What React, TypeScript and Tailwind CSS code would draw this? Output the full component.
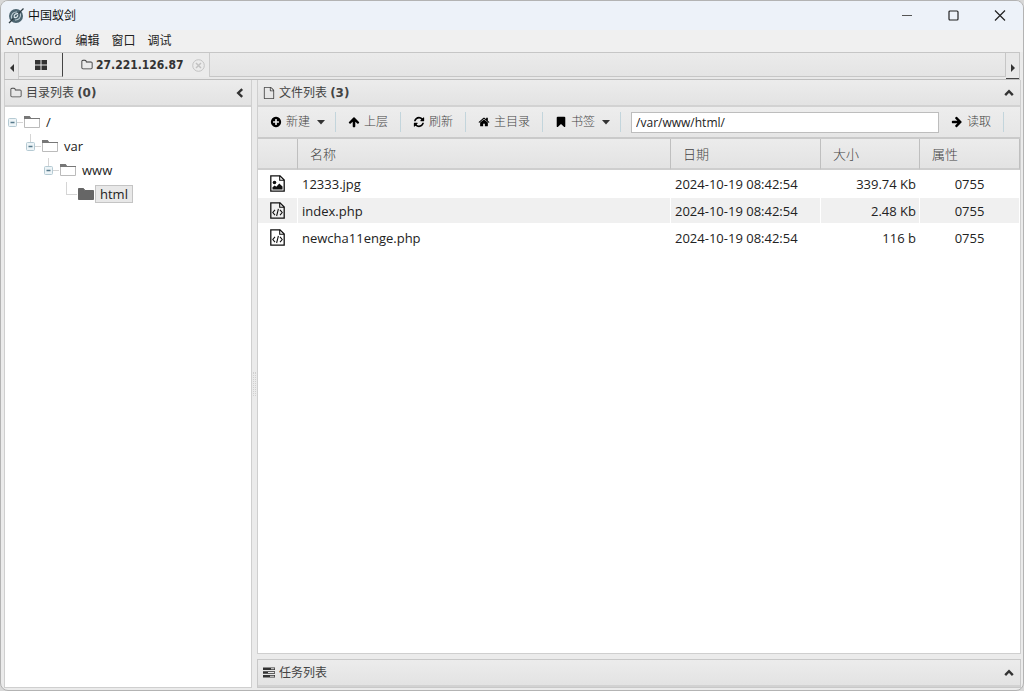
import React, { useState } from "react";
import clsx from "clsx";

interface FileRow {
  name: string;
  date: string;
  size: string;
  mode: string;
  kind: "image" | "code";
}

const files: FileRow[] = [
  { name: "12333.jpg", date: "2024-10-19 08:42:54", size: "339.74 Kb", mode: "0755", kind: "image" },
  { name: "index.php", date: "2024-10-19 08:42:54", size: "2.48 Kb", mode: "0755", kind: "code" },
  { name: "newcha11enge.php", date: "2024-10-19 08:42:54", size: "116 b", mode: "0755", kind: "code" },
];

const icons = {
  plus: "M1344 960v-128q0-26-19-45t-45-19h-256v-256q0-26-19-45t-45-19h-128q-26 0-45 19t-19 45v256h-256q-26 0-45 19t-19 45v128q0 26 19 45t45 19h256v256q0 26 19 45t45 19h128q26 0 45-19t19-45v-256h256q26 0 45-19t19-45zm320-64q0 209-103 385.5t-279.5 279.5-385.5 103-385.5-103-279.5-279.5-103-385.5 103-385.5 279.5-279.5 385.5-103 385.5 103 279.5 279.5 103 385.5z",
  up: "M1675 971q0 51-37 90l-75 75q-38 38-91 38-54 0-90-38l-294-293v704q0 52-37.5 84.5t-90.5 32.5h-128q-53 0-90.5-32.5t-37.5-84.5v-704l-294 293q-36 38-90 38t-90-38l-75-75q-38-38-38-90 0-53 38-91l651-651q35-37 90-37 54 0 91 37l651 651q37 39 37 91z",
  refresh:
    "M1639 1056q0 5-1 7-64 268-268 434.5t-478 166.5q-146 0-282.5-55t-243.5-157l-129 129q-19 19-45 19t-45-19-19-45v-448q0-26 19-45t45-19h448q26 0 45 19t19 45-19 45l-137 137q71 66 161 102t187 36q134 0 250-65t186-179q11-17 53-117 8-23 30-23h192q13 0 22.5 9.5t9.5 22.5zm25-800v448q0 26-19 45t-45 19h-448q-26 0-45-19t-19-45 19-45l138-138q-148-137-349-137-134 0-250 65t-186 179q-11 17-53 117-8 23-30 23h-199q-13 0-22.5-9.5t-9.5-22.5v-7q65-268 270-434.5t480-166.5q146 0 284 55.5t245 156.5l130-129q19-19 45-19t45 19 19 45z",
  home: "M1472 992v480q0 26-19 45t-45 19h-384v-384h-256v384h-384q-26 0-45-19t-19-45v-480q0-1 .5-3t.5-3l575-474 575 474q1 2 1 6zm223-69l-62 74q-8 9-21 11h-3q-13 0-21-7l-692-577-692 577q-12 8-24 7-13-2-21-11l-62-74q-8-10-7-23.5t11-21.5l719-599q32-26 76-26t76 26l244 204v-195q0-14 9-23t23-9h192q14 0 23 9t9 23v408l219 182q10 8 11 21.5t-7 23.5z",
  bookmark:
    "M1420 128q23 0 44 9 33 13 52.5 41t19.5 62v1289q0 34-19.5 62t-52.5 41q-19 8-44 8-48 0-83-32l-441-424-441 424q-36 33-83 33-23 0-44-9-33-13-52.5-41t-19.5-62v-1289q0-34 19.5-62t52.5-41q21-9 44-9h1048z",
  folder:
    "M1600 1312v-704q0-40-28-68t-68-28h-704q-40 0-68-28t-28-68v-64q0-40-28-68t-68-28h-320q-40 0-68 28t-28 68v960q0 40 28 68t68 28h1216q40 0 68-28t28-68zm128-704v704q0 92-66 158t-158 66h-1216q-92 0-158-66t-66-158v-960q0-92 66-158t158-66h320q92 0 158 66t66 158v32h672q92 0 158 66t66 158z",
  file: "M1596 380q28 28 48 76t20 88v1152q0 40-28 68t-68 28h-1344q-40 0-68-28t-28-68v-1600q0-40 28-68t68-28h896q40 0 88 20t76 48zm-444-244v376h376q-10-29-22-41l-313-313q-12-12-41-22zm384 1528v-1024h-416q-40 0-68-28t-28-68v-416h-768v1536h1280z",
};

const Icon: React.FC<{ d: string; className?: string }> = ({ d, className }) => (
  <svg viewBox="0 0 1792 1792" fill="currentColor" className={clsx("shrink-0", className || "w-3 h-3")}>
    <path d={d} />
  </svg>
);

const Chevron: React.FC<{ left?: boolean }> = ({ left }) => (
  <svg viewBox="0 0 10 10" className="w-[10px] h-[10px] shrink-0" fill="none" stroke="#333" strokeWidth="2.4">
    <path d={left ? "M7.2 1.2L3.2 5L7.2 8.8" : "M1.2 7.2L5 3.2L8.8 7.2"} />
  </svg>
);

const Logo = () => (
  <svg viewBox="0 0 16 16" className="w-4 h-4">
    <circle cx="8" cy="8" r="7" fill="#4c6470" />
    <path d="M3.6 10.5C2.6 6.5 5.5 3.6 9 4M12.4 5.5c1 4-1.9 6.9-5.4 6.5" fill="none" stroke="#b9c8cf" strokeWidth="1.1" />
    <path d="M10.2 5.6C7 5.4 5.6 7.5 6.4 9.5c1.9.5 3.7-.8 3.3-2.7" fill="none" stroke="#dde6ea" strokeWidth="1.1" />
    <path d="M1 15L5.5 10.5M10.5 5.5L15.5.5" stroke="#2d3b42" strokeWidth="1.3" />
  </svg>
);

const FileIcon: React.FC<{ kind: FileRow["kind"] }> = ({ kind }) => (
  <svg viewBox="0 0 15 17" className="w-[15px] h-[17px] mx-auto" fill="none" stroke="#111" strokeWidth="1.3">
    <path d="M.8.8H10L14.2 5V16.2H.8z" />
    <path d="M9.7.8V5.3H14.2" strokeWidth="1.1" />
    {kind === "image" ? (
      <g fill="#111" stroke="none">
        <circle cx="4.5" cy="7.5" r="1.8" />
        <path d="M2.5 14.5V12.3L4.7 10.6L6.3 11.8L9.3 8.5L12.5 11.5V14.5z" />
      </g>
    ) : (
      <path d="M5 7.8L2.8 10.5L5 13.2M10 7.8L12.2 10.5L10 13.2M8.4 6.8L6.6 14" strokeWidth="1.1" />
    )}
  </svg>
);

const Caret = () => (
  <svg viewBox="0 0 8 5" className="w-2 h-[5px] ml-[3px]" fill="#333">
    <path d="M0 0H8L4 4.5z" />
  </svg>
);

const ToolButton: React.FC<{ icon: string; label: string; menu?: boolean; iconClass?: string }> = ({
  icon,
  label,
  menu,
  iconClass,
}) => (
  <button
    className={clsx(
      "flex items-center gap-1 h-5 pl-3 border-r border-[#c3d5dc] text-xs shrink-0 whitespace-nowrap",
      menu ? "pr-[10px]" : "pr-3"
    )}
  >
    <Icon d={icon} className={clsx("w-3 h-3 text-black", iconClass)} />
    <span className="font-light text-[#444]">{label}</span>
    {menu && <Caret />}
  </button>
);

const TreeNode: React.FC<{
  label: string;
  root?: boolean;
  open?: boolean;
  selected?: boolean;
  children?: React.ReactNode;
}> = ({ label, root, open, selected, children }) => (
  <li>
    <div className="flex items-center h-6">
      <svg viewBox="0 0 18 24" className="w-[18px] h-6 shrink-0" fill="none">
        {!root && <path d={open ? "M4.5 0V8" : "M4.5 0V12"} stroke="#d5d5d5" />}
        <path d="M4 12.5H15" stroke="#d5d5d5" />
        {open && (
          <>
            <rect x=".5" y="8.5" width="8" height="8" rx="1" fill="#edf4f7" stroke="#b5cad3" />
            <path d="M2.5 12.5H6.5" stroke="#55788a" strokeWidth="1.5" />
          </>
        )}
      </svg>
      <svg viewBox="0 0 16 12" className="w-4 h-3 shrink-0 -ml-[2px]" fill={open ? "#fff" : "#666"}>
        <path d="M.5 11.5V.5H5.5L7 2.5H15.5V11.5z" stroke={open ? "#bbb" : "#666"} />
        {open && <path d="M0 3V0H5.7L7 2H16V3z" fill="#777" />}
      </svg>
      <span
        className={clsx(
          "ml-px px-1 h-[18px] leading-4 border text-[13px]",
          selected ? "bg-[#e8e8e8] border-[#c4c4c4]" : "border-transparent"
        )}
      >
        {label}
      </span>
    </div>
    {children && <ul className="pl-[18px]">{children}</ul>}
  </li>
);

const panelHead =
  "flex items-center justify-between h-[27px] px-[5px] border-b-2 border-[#d2d2d2] bg-linear-to-b from-[#ececec] to-[#e3e3e3] text-xs text-[#444] shrink-0";
const countText = "font-['DejaVu_Sans',sans-serif] font-bold";

const App: React.FC = () => {
  const [path, setPath] = useState("/var/www/html/");

  return (
    <div className="h-screen bg-[#d8d8d8]">
      <div className="flex flex-col h-full overflow-hidden border border-[#b3b3b3] rounded-lg bg-[#ebebeb] font-['Open_Sans','Noto_Sans_CJK_SC',sans-serif] text-[#222]">
        {/* Title bar */}
        <header className="flex items-center justify-between h-[29px] pl-[7px] bg-[#edf2f9] shrink-0">
          <div className="flex items-center gap-1">
            <Logo />
            <h1 className="text-xs text-[#111]">中国蚁剑</h1>
          </div>
          <div className="flex h-full">
            <button aria-label="最小化" className="w-[46px] flex items-center justify-center">
              <svg viewBox="0 0 12 12" className="w-3 h-3">
                <path d="M0 5.5H10" stroke="#555" />
              </svg>
            </button>
            <button aria-label="最大化" className="w-[46px] flex items-center justify-center">
              <svg viewBox="0 0 12 12" className="w-3 h-3" fill="none">
                <rect x="1" y="1" width="9" height="9" rx="1" stroke="#222" strokeWidth="1.2" />
              </svg>
            </button>
            <button aria-label="关闭" className="w-[46px] flex items-center justify-center">
              <svg viewBox="0 0 12 12" className="w-3 h-3" fill="none">
                <path d="M1 .5L11 10.5M11 .5L1 10.5" stroke="#222" strokeWidth="1.2" />
              </svg>
            </button>
          </div>
        </header>

        {/* Menu */}
        <nav className="flex items-center gap-3 h-[22px] pl-[6px] bg-[#f0f0f0] text-xs shrink-0">
          <button className="pr-[2px]">AntSword</button>
          <button>编辑</button>
          <button>窗口</button>
          <button>调试</button>
        </nav>

        {/* Tabs */}
        <div className="flex h-7 mx-[3px] border border-[#c6c6c6] border-b-[#bdbdbd] bg-[#e8e8e8] shrink-0">
          <button aria-label="向左" className="w-[14px] flex items-center justify-center border-r border-[#ccc]">
            <svg viewBox="0 0 4 8" className="w-1 h-2 mt-1" fill="#333">
              <path d="M4 0V8L0 4z" />
            </svg>
          </button>
          <button
            aria-label="主页"
            className="w-[44px] h-6 flex items-center justify-center border-r border-b border-r-[#444] border-b-[#c6c6c6] bg-[#ebebeb]"
          >
            <svg viewBox="0 0 12 10" className="w-3 h-[10px]" fill="#333">
              <path d="M0 0H5.5V4.5H0zM6.5 0H12V4.5H6.5zM0 5.5H5.5V10H0zM6.5 5.5H12V10H6.5z" />
            </svg>
          </button>
          <div className="flex items-center h-6 pl-[18px] pr-1 border-r border-[#ccc] bg-[#ebebeb] shrink-0 text-[#333]">
            <Icon d={icons.folder} />
            <span className="ml-[3px] text-xs font-bold font-['DejaVu_Sans_Condensed','DejaVu_Sans',sans-serif]">
              27.221.126.87
            </span>
            <button aria-label="关闭标签" className="ml-[9px]">
              <svg viewBox="0 0 13 13" className="w-[13px] h-[13px]" fill="none" stroke="#c2c2c2">
                <circle cx="6.5" cy="6.5" r="5.8" />
                <path d="M4 4L9 9M9 4L4 9" strokeWidth="1.5" />
              </svg>
            </button>
          </div>
          <div className="flex-1 h-6 border-r border-b border-[#c6c6c6] bg-linear-to-b from-[#ebebeb] to-[#e4e4e4]" />
          <button aria-label="向右" className="w-[13px] flex items-center justify-center border-b border-[#444]">
            <svg viewBox="0 0 4 8" className="w-1 h-2 mt-1" fill="#333">
              <path d="M0 0V8L4 4z" />
            </svg>
          </button>
        </div>

        <div className="flex flex-1 min-h-0 ml-[3px] mr-[2px] mb-[2px]">
          {/* Directory tree */}
          <aside className="flex flex-col w-[248px] border-x border-b border-[#cfcfcf] bg-white shrink-0">
            <div className={panelHead}>
              <h2 className="flex items-center gap-1">
                <Icon d={icons.folder} />
                <span>
                  目录列表 <span className={countText}>(0)</span>
                </span>
              </h2>
              <button aria-label="收起" className="pr-px">
                <Chevron left />
              </button>
            </div>
            <ul className="pl-[3px] pt-[3px]">
              <TreeNode label="/" root open>
                <TreeNode label="var" open>
                  <TreeNode label="www" open>
                    <TreeNode label="html" selected />
                  </TreeNode>
                </TreeNode>
              </TreeNode>
            </ul>
          </aside>

          {/* Splitter */}
          <div className="w-[5px] flex items-center justify-center shrink-0">
            <div className="w-[3px] h-6 border-x border-dotted border-[#d0d0d0]" />
          </div>

          <main className="flex flex-col flex-1 min-w-0">
            <section className="flex flex-col flex-1 min-h-0 border border-t-0 border-[#cfcfcf] bg-white">
              <div className={panelHead}>
                <h2 className="flex items-center gap-1">
                  <Icon d={icons.file} />
                  <span>
                    文件列表 <span className={countText}>(3)</span>
                  </span>
                </h2>
                <button aria-label="收起" className="pr-px">
                  <Chevron />
                </button>
              </div>

              {/* Toolbar */}
              <div className="flex items-center h-8 pr-4 border-b-2 border-[#cacaca] bg-linear-to-b from-[#ededed] to-[#e6e6e6] shrink-0">
                <ToolButton icon={icons.plus} label="新建" menu />
                <ToolButton icon={icons.up} label="上层" />
                <ToolButton icon={icons.refresh} label="刷新" />
                <ToolButton icon={icons.home} label="主目录" />
                <ToolButton icon={icons.bookmark} label="书签" menu />
                <input
                  aria-label="路径"
                  value={path}
                  onChange={(e) => setPath(e.target.value)}
                  className="flex-1 min-w-0 h-[21px] ml-[10px] px-1 border border-[#bdbdbd] bg-white text-xs outline-none"
                />
                <ToolButton icon={icons.up} label="读取" iconClass="rotate-90" />
              </div>

              {/* File list */}
              <table className="w-full table-fixed border-separate border-spacing-0 text-[13px] leading-5">
                <colgroup>
                  <col className="w-10" />
                  <col />
                  <col className="w-[150px]" />
                  <col className="w-[99px]" />
                  <col className="w-[100px]" />
                </colgroup>
                <thead>
                  <tr className="h-[31px] bg-linear-to-b from-[#ececec] to-[#e2e2e2] text-left text-[#444]">
                    {["", "名称", "日期", "大小", "属性"].map((title) => (
                      <th
                        key={title}
                        className="pl-3 border-r border-b-2 border-r-[#bfbfbf] border-b-[#cecece] font-light"
                      >
                        {title}
                      </th>
                    ))}
                  </tr>
                </thead>
                <tbody>
                  {files.map((file) => (
                    <tr key={file.name} className="h-[27px] even:bg-[#f0f0f0]">
                      <td className="border-r border-y border-white">
                        <FileIcon kind={file.kind} />
                      </td>
                      <td className="px-1 border-r border-y border-white">{file.name}</td>
                      <td className="px-1 border-r border-y border-white whitespace-nowrap">{file.date}</td>
                      <td className="px-[3px] border-r border-y border-white text-right">{file.size}</td>
                      <td className="px-1 border-r border-y border-white text-center">{file.mode}</td>
                    </tr>
                  ))}
                </tbody>
              </table>
            </section>

            {/* Tasks */}
            <section className="mt-[5px] border border-[#c8c8c8] shrink-0">
              <div className={panelHead}>
                <h2 className="flex items-center gap-1">
                  <svg viewBox="0 0 12 11" className="w-3 h-[11px]" fill="#333">
                    <path d="M0 .5H12V3H0zM0 4.2H12V6.7H0zM0 8H12V10.5H0z" />
                    <path d="M8 1.2H11.3V2.2H8zM5 4.9H11.3V6H5zM7 8.7H11.3V9.8H7z" fill="#e8e8e8" />
                  </svg>
                  <span>任务列表</span>
                </h2>
                <button aria-label="展开" className="pr-px">
                  <Chevron />
                </button>
              </div>
            </section>
          </main>
        </div>
      </div>
    </div>
  );
};

export default App;
